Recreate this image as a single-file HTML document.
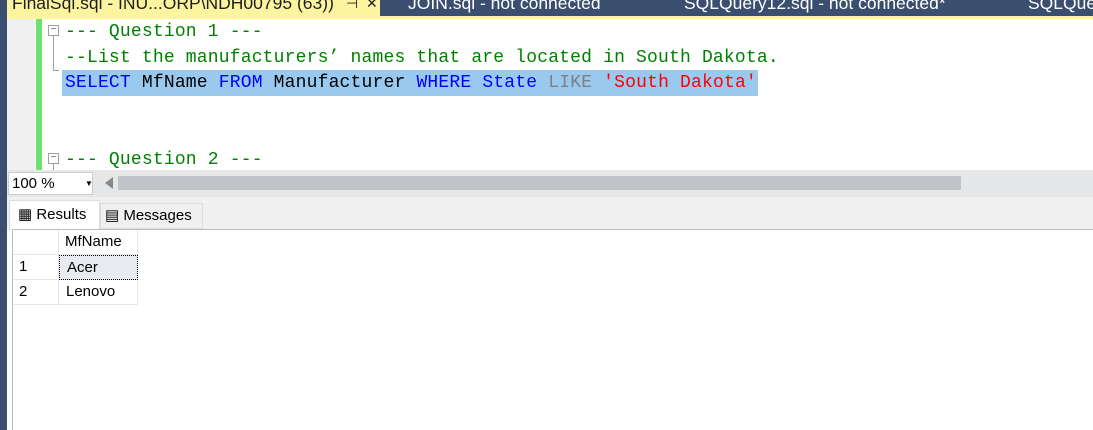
<!DOCTYPE html>
<html><head><style>
body{margin:0;width:1093px;height:430px;overflow:hidden;background:#fff;position:relative;font-family:"Liberation Sans",sans-serif}
div{position:absolute;box-sizing:border-box}
.code{font-family:"Liberation Mono",monospace;font-size:18px;letter-spacing:0.18px;white-space:pre;line-height:25px}
.g{color:#008000}.b{color:#0000ff}.k{color:#000}.gr{color:#808080}.r{color:#ff0000}
.tab{color:#fff;font-size:17.5px;top:-7px;white-space:pre}
.cell{font-size:15px;color:#000;border-right:1px solid #e6e6e6;border-bottom:1px solid #e6e6e6;padding-left:7px;line-height:24px}
</style></head><body>
<div style="left:0;top:0;width:1093px;height:16px;background:#3a4e70"></div>
<div style="left:0;top:16px;width:1093px;height:3px;background:#fdf4a0"></div>
<div style="left:5px;top:0;width:375px;height:17px;background:#fdf4a0"></div>
<div class="tab" style="left:12px;color:#1e1e1e">FinalSql.sql - INU...ORP\NDH00795 (63))</div>
<div class="tab" style="left:346px;color:#1e1e1e;font-size:14px;top:-5px">⊣  ✕</div>
<div class="tab" style="left:408px">JOIN.sql - not connected</div>
<div class="tab" style="left:684px">SQLQuery12.sql - not connected*</div>
<div class="tab" style="left:1028px">SQLQue</div>
<div style="left:0;top:0;width:7px;height:430px;background:#3a4e70"></div>
<div style="left:7px;top:19px;width:28px;height:151px;background:#f0f0f0"></div>
<div style="left:36px;top:19px;width:6px;height:151px;background:#6ee06e"></div>
<div style="left:53px;top:26px;width:1px;height:45px;background:#a0a0a0"></div>
<div style="left:53px;top:70px;width:6px;height:1px;background:#a0a0a0"></div>
<div style="left:53px;top:160px;width:1px;height:10px;background:#a0a0a0"></div>
<div style="left:48px;top:25px;width:11px;height:11px;border:1px solid #a0a0a0;background:#fff;font-size:10px;line-height:8px;text-align:center;color:#555">−</div>
<div style="left:48px;top:153px;width:11px;height:11px;border:1px solid #a0a0a0;background:#fff;font-size:10px;line-height:8px;text-align:center;color:#555">−</div>
<div style="left:62px;top:70px;width:696px;height:26px;background:#99c9ef"></div>
<div class="code g" style="left:65px;top:20px">--- Question 1 ---</div>
<div class="code g" style="left:65px;top:46px">--List the manufacturers’ names that are located in South Dakota.</div>
<div class="code" style="left:65px;top:71px"><span class="b">SELECT</span> <span class="k">MfName</span> <span class="b">FROM</span> <span class="k">Manufacturer</span> <span class="b">WHERE</span> <span class="b">State</span> <span class="gr">LIKE</span> <span class="r">'South Dakota'</span></div>
<div class="code g" style="left:65px;top:148px">--- Question 2 ---</div>
<div style="left:7px;top:170px;width:1086px;height:27px;background:#e6e7e8"></div>
<div style="left:8px;top:172px;width:85px;height:23px;background:#fff;border:1px solid #ccc;font-size:15px;line-height:22px;padding-left:3px">100 %<span style="position:absolute;left:76px;top:0;font-size:8px">▼</span></div>
<div style="left:105px;top:177px;width:0;height:0;border-top:6px solid transparent;border-bottom:6px solid transparent;border-right:8px solid #888"></div>
<div style="left:118px;top:176px;width:843px;height:14px;background:#c2c3c9"></div>
<div style="left:7px;top:197px;width:1086px;height:33px;background:#f0f0f0"></div>
<div style="left:9px;top:200px;width:91px;height:31px;background:#fff;border:1px solid #ddd;border-bottom:none;font-size:15px;line-height:28px;padding-left:8px">▦ Results</div>
<div style="left:100px;top:203px;width:103px;height:26px;background:#f0f0f0;border:1px solid #ddd;font-size:15px;line-height:24px;padding-left:4px">▤ Messages</div>
<div style="left:12px;top:229px;width:1081px;height:201px;background:#fff;border-left:1px solid #bbb;border-top:1px solid #bbb"></div>
<div class="cell" style="left:13px;top:230px;width:46px;height:25px"></div>
<div class="cell" style="left:59px;top:230px;width:79px;height:25px;padding-left:6px">MfName</div>
<div class="cell" style="left:13px;top:255px;width:46px;height:25px;padding-left:6px">1</div>
<div class="cell" style="left:59px;top:255px;width:79px;height:25px;background:#e8ecf0;border:1px dotted #000">Acer</div>
<div class="cell" style="left:13px;top:280px;width:46px;height:25px;padding-left:6px">2</div>
<div class="cell" style="left:59px;top:280px;width:79px;height:25px">Lenovo</div>
</body></html>
